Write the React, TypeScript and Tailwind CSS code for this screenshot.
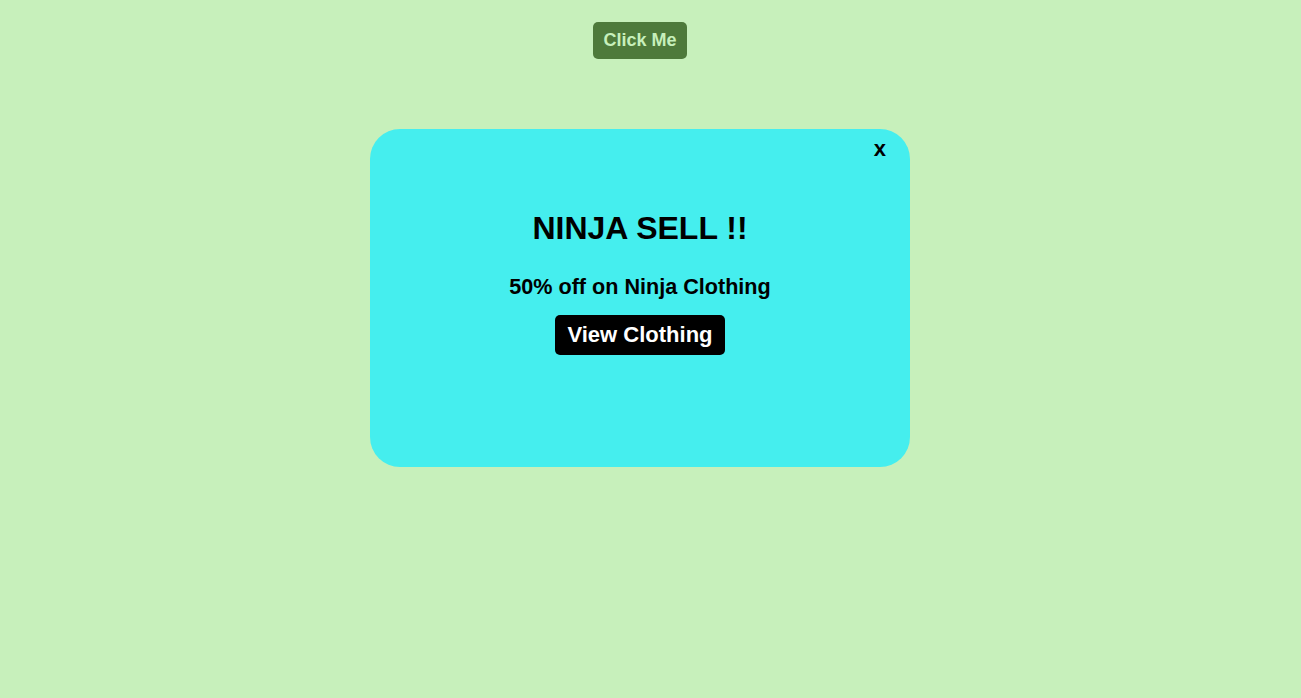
import React from 'react';

export default function App() {
  const [open, setOpen] = React.useState(true);

  return (
    <div className="min-h-screen w-full bg-[#c7f0bb] pr-[21px] flex flex-col items-center font-['Liberation_Sans',Arial,sans-serif]">
      <button
        onClick={() => setOpen(true)}
        className="mt-[22px] h-[37px] w-[94px] rounded-[5px] bg-[#4e7a3b] text-[18px] font-bold text-[#c7f0bb] leading-[37px]"
      >
        Click Me
      </button>

      {open && (
        <div className="relative mt-[70px] w-[540px] h-[338px] rounded-[30px] bg-[#45eeee] flex flex-col items-center">
          <button
            onClick={() => setOpen(false)}
            className="absolute right-[24px] top-[7px] text-[22px] font-bold text-black leading-[26px]"
          >
            x
          </button>
          <h1 className="mt-[81px] text-[32px] font-bold leading-[37px] text-black">NINJA SELL !!</h1>
          <p className="mt-[28px] text-[21.6px] font-bold leading-[24px] text-black">50% off on Ninja Clothing</p>
          <button className="mt-[16px] h-[40px] px-[12px] rounded-[5px] bg-black text-[22px] font-bold leading-[40px] text-white">
            View Clothing
          </button>
        </div>
      )}
    </div>
  );
}
